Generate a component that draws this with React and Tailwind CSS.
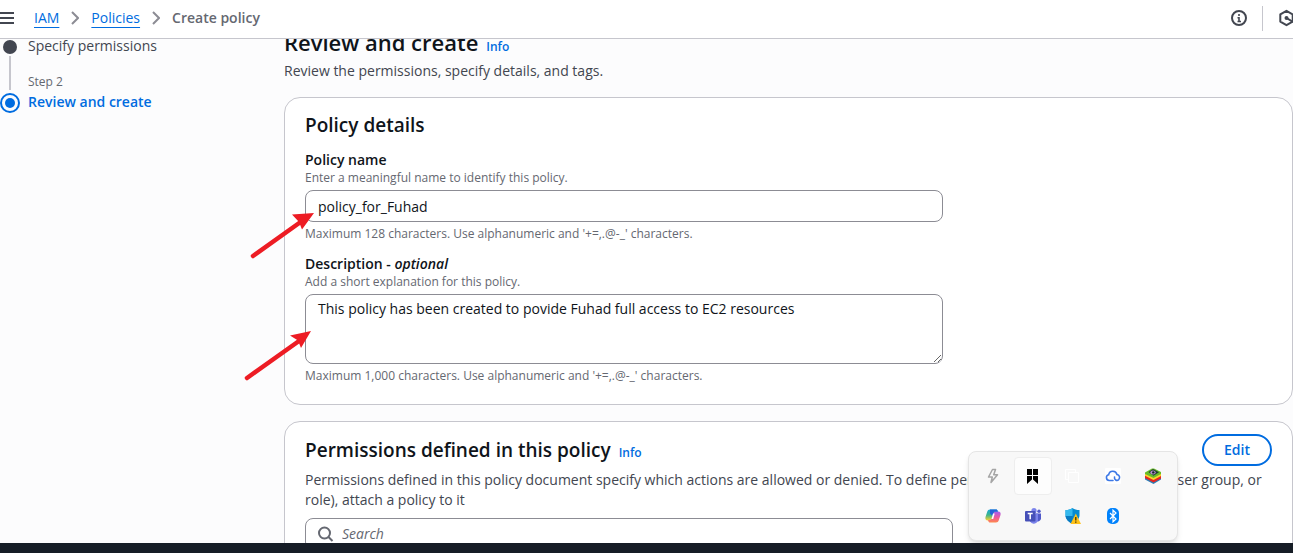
import React from "react";

function Chevron() {
  return (
    <svg className="h-4 w-2 shrink-0" viewBox="0 0 8 16" fill="none" stroke="#8c8c94" strokeWidth="2" aria-hidden="true">
      <path d="M1 2l6 6-6 6" />
    </svg>
  );
}

function Header() {
  return (
    <header className="relative z-10 flex h-[39px] shrink-0 items-center border-b border-[#c6c6cd] bg-white pb-0.5">
      <button aria-label="Open navigation" className="h-4 w-[14px] text-[#424650]">
        <svg viewBox="0 0 14 16" className="h-4 w-[14px]" fill="none" stroke="currentColor" strokeWidth="2" aria-hidden="true">
          <path d="M0 3h14M0 8h14M0 13h14" />
        </svg>
      </button>
      <nav aria-label="Breadcrumbs" className="ml-5 flex items-center gap-3 text-[14px] leading-5">
        <a href="#iam" className="text-[#006ce0] underline underline-offset-4">IAM</a>
        <Chevron />
        <a href="#policies" className="text-[#006ce0] underline underline-offset-4">Policies</a>
        <Chevron />
        <span className="font-semibold text-[#656871]">Create policy</span>
      </nav>
      <div className="ml-auto flex items-center overflow-hidden">
        <button aria-label="Information" className="text-[#424650]">
          <svg viewBox="0 0 16 16" className="h-4 w-4" fill="none" stroke="currentColor" strokeWidth="2" aria-hidden="true">
            <circle cx="8" cy="8" r="7" />
            <path d="M8 4v2M6.500 7.700H8V11M6.500 11.500h3.500" strokeWidth="1.600" />
          </svg>
        </button>
        <div className="ml-[15px] h-[25px] w-px bg-[#c6c6cd]" />
        <button aria-label="Settings" className="ml-4 -mr-1 text-[#424650]">
          <svg viewBox="0 0 18 18" className="h-[18px] w-[18px]" fill="none" stroke="currentColor" strokeWidth="2" strokeLinejoin="round" aria-hidden="true">
            <path d="M7.500 1.800l6.200 3.600v7.200l-6.200 3.600-6.200-3.600V5.400z" />
            <path d="M7.500 9l6.500 4" />
            <circle cx="7.500" cy="9" r="2" fill="currentColor" stroke="none" />
          </svg>
        </button>
      </div>
    </header>
  );
}

function Steps() {
  return (
    <ol className="-mt-[3px] w-[284px] shrink-0">
      <li className="flex h-[38px] gap-2">
        <div className="flex w-5 flex-col items-center pt-1">
          <span className="h-[14px] w-[14px] rounded-full bg-[#424650]" />
          <span className="mt-0.5 w-0.5 flex-1 bg-[#c6c6cd]" />
        </div>
        <a href="#specify" className="text-[14px] leading-5 text-[#424650]">Specify permissions</a>
      </li>
      <li className="flex gap-2">
        <div className="flex w-5 flex-col items-center">
          <span className="h-4 w-0.5 bg-[#c6c6cd]" />
          <span className="mt-[3px] flex h-5 w-5 items-center justify-center rounded-full border-2 border-[#006ce0]">
            <span className="h-[10px] w-[10px] rounded-full bg-[#006ce0]" />
          </span>
        </div>
        <div>
          <div className="text-[12px] leading-4 text-[#656871]">Step 2</div>
          <div className="mt-0.5 text-[14px] leading-5 font-semibold text-[#006ce0]">Review and create</div>
        </div>
      </li>
    </ol>
  );
}

function InfoLink() {
  return <a href="#info" className="text-[12px] font-semibold text-[#006ce0]">Info</a>;
}

function PolicyDetails() {
  return (
    <section className="mt-4 rounded-2xl border border-[#c6c6cd] bg-white px-5 pt-[15px] pb-5">
      <h2 className="text-[19px] leading-6 font-semibold">Policy details</h2>
      <div className="mt-[13px] max-w-[638px]">
        <label htmlFor="policy-name" className="block text-[14px] leading-5 font-semibold">Policy name</label>
        <p className="text-[12px] leading-4 text-[#656871]">Enter a meaningful name to identify this policy.</p>
        <input
          id="policy-name"
          defaultValue="policy_for_Fuhad"
          className="mt-1 block h-8 w-full rounded-lg border border-[#8c8c94] bg-white px-3 text-[14px] leading-5"
        />
        <p className="mt-1 text-[12px] leading-4 text-[#656871]">Maximum 128 characters. Use alphanumeric and '+=,.@-_' characters.</p>
      </div>
      <div className="mt-3 max-w-[638px]">
        <label htmlFor="description" className="block text-[14px] leading-5 font-semibold">Description - <i>optional</i></label>
        <p className="text-[12px] leading-4 text-[#656871]">Add a short explanation for this policy.</p>
        <textarea
          id="description"
          defaultValue="This policy has been created to povide Fuhad full access to EC2 resources"
          className="mt-1 block h-[70px] w-full resize rounded-lg border border-[#8c8c94] bg-white px-3 py-1 text-[14px] leading-5"
        />
        <p className="mt-1 text-[12px] leading-4 text-[#656871]">Maximum 1,000 characters. Use alphanumeric and '+=,.@-_' characters.</p>
      </div>
    </section>
  );
}

function Permissions() {
  return (
    <section className="mt-4 rounded-2xl border border-[#c6c6cd] bg-white px-5 pt-3 pb-5">
      <div className="flex items-center justify-between">
        <div className="flex items-baseline gap-2">
          <h2 className="text-[19px] leading-6 font-semibold">Permissions defined in this policy</h2>
          <InfoLink />
        </div>
        <button className="h-8 w-[70px] rounded-full border-2 border-[#006ce0] text-[14px] leading-5 font-semibold text-[#006ce0]">Edit</button>
      </div>
      <p className="mt-1 text-[14px] leading-5 text-[#424650]">
        Permissions defined in this policy document specify which actions are allowed or denied. To define permissions for an identity (user, user group, or role), attach a policy to it
      </p>
      <div className="mt-2 flex h-8 max-w-[648px] items-center gap-2 rounded-lg border border-[#8c8c94] px-3">
        <svg viewBox="0 0 16 16" className="h-4 w-4 shrink-0" fill="none" stroke="#656871" strokeWidth="2" aria-hidden="true">
          <circle cx="6.500" cy="7" r="5.500" />
          <path d="M10.500 11l4 4" />
        </svg>
        <input type="search" aria-label="Search" placeholder="Search" className="w-full text-[14px] leading-5 outline-none placeholder:text-[#656871] placeholder:italic" />
      </div>
    </section>
  );
}

function Arrows() {
  return (
    <svg className="pointer-events-none absolute top-[205px] left-[240px] z-20 h-[185px] w-[80px]" viewBox="240 205 80 185" aria-hidden="true">
      <g stroke="#ed1c24" strokeWidth="4.500" strokeLinecap="round">
        <path d="M253 256L302 221" />
        <path d="M247 378L299 341" />
      </g>
      <g fill="#ed1c24">
        <path d="M314 213L292 214.500L299 222L302 229.500z" />
        <path d="M311 331L290 335.500L298 340.500L301 348z" />
      </g>
    </svg>
  );
}

function TrayIcon({ label, children, active }) {
  return (
    <button aria-label={label} className={active ? "flex h-[38px] w-[38px] items-center justify-center rounded border border-[#eeeeee] bg-[#fdfdfd]" : "flex h-[38px] w-[38px] items-center justify-center"}>
      <svg viewBox="0 0 16 16" className="h-4 w-4">{children}</svg>
    </button>
  );
}

function Tray() {
  return (
    <div className="absolute right-[115px] bottom-[12px] z-20 grid h-[90px] w-[210px] grid-cols-5 content-center justify-items-center gap-y-0.5 rounded-lg border border-[#e5e5e5] bg-[#f8f8f8] px-1 shadow-md">
      <TrayIcon label="Power">
        <path d="M7.500 1.500L3.500 9h3.800l-1.300 5.500L12.500 6.800H8.700L10.500 1.500z" fill="none" stroke="#a5a5a5" strokeWidth="1.500" strokeLinejoin="round" />
      </TrayIcon>
      <TrayIcon label="Bookmarks" active>
        <path d="M2 1h5v6H2zM8 1h5v6H8zM2 8h5v3.500L2 16zM8 8h5v8l-5-4.500z" fill="#000" />
      </TrayIcon>
      <TrayIcon label="Windows">
        <path d="M3.500 4.500h10v10h-10zM3.500 11.500h-3V1.500h10v3" fill="none" stroke="#fff" />
      </TrayIcon>
      <TrayIcon label="Cloud sync">
        <rect width="16" height="16" rx="1" fill="#fff" />
        <path d="M8 12.500H4.200a2.900 2.900 0 0 1-.6-5.700A4.300 4.300 0 0 1 12 6.500a3 3 0 0 1 1.700 5.100c-1.900 1.800-4.700 0-4.200-2.600" fill="none" stroke="#3c78e6" strokeWidth="1.600" strokeLinecap="round" />
      </TrayIcon>
      <TrayIcon label="App player">
        <path d="M0 8.500l8 4 8-4v3L8.500 16 0 11.500z" fill="#2c7fb8" />
        <path d="M0 7l8 4 8-4v3.500L8.500 14.500 0 10z" fill="#e52620" />
        <path d="M0 5.200l8 4 8-4v2.800L8.500 12 0 7.700z" fill="#ffd329" />
        <path d="M0 4.500L7 .5h2l7 3.500v2L8.500 10 0 6z" fill="#68bd28" />
        <path d="M3.500 4L8 1l6 3.200-5.500 3.500z" fill="#243e32" />
        <ellipse cx="8" cy="4.400" rx="2.700" ry="2" fill="#b193c8" />
        <circle cx="8.300" cy="4.400" r="1.200" fill="#17252a" />
      </TrayIcon>
      <TrayIcon label="Copilot">
        <defs>
          <linearGradient id="cp-left" x1="0" y1="0" x2="0" y2="1">
            <stop stopColor="#16a7d8" /><stop offset=".5" stopColor="#3fb58a" /><stop offset="1" stopColor="#ffd02f" />
          </linearGradient>
          <linearGradient id="cp-right" x1="0" y1="0" x2="0" y2="1">
            <stop stopColor="#a35cf0" /><stop offset=".55" stopColor="#ee5a9a" /><stop offset="1" stopColor="#ff8a4c" />
          </linearGradient>
        </defs>
        <path d="M5 1.500h6c1 0 1.500.6 1.700 1.500L13 4h-2c-1 0-1.500.6-1.800 1.500L7.600 11c-.4 1.200-1 1.500-2 1.500H2.800C.8 12.500 0 11 .5 9L2.300 3.500C2.800 2.200 3.500 1.500 5 1.500z" fill="url(#cp-left)" />
        <path d="M11 14.500H5c-1 0-1.500-.6-1.700-1.500L3 12h2c1 0 1.500-.6 1.800-1.500L8.400 5c.4-1.200 1-1.500 2-1.500h2.800c2 0 2.800 1.500 2.300 3.500l-1.800 5.500c-.5 1.300-1.200 2-2.700 2z" fill="url(#cp-right)" />
        <path d="M5 1.500h6c1 0 1.500.6 1.700 1.500l.3.600h-2.500c-1 0-1.700.4-2.100 1.400L7.500 8 5 5.500z" fill="#2263d8" />
        <path d="M8 5.500h1.700l-1.500 5.500H6.500z" fill="#fff" />
      </TrayIcon>
      <TrayIcon label="Teams">
        <circle cx="9" cy="2.700" r="2.600" fill="#7b83eb" />
        <circle cx="14" cy="3.200" r="1.700" fill="#5059c9" />
        <path d="M11 5.500h5v5a3 3 0 0 1-4 2.700z" fill="#5059c9" />
        <path d="M5 5.500h8v6a4.300 4.300 0 0 1-8 2z" fill="#7b83eb" />
        <rect y="3" width="10.500" height="10.500" rx="1" fill="#4650b8" />
        <path d="M2.700 5.500h5M5.200 5.500v5.700" stroke="#fff" strokeWidth="1.500" />
      </TrayIcon>
      <TrayIcon label="Security">
        <path d="M7.500 0c2 1.500 4 2 7 2v5c0 4-3 7-7 9-4-2-7-5-7-9V2c3 0 5-.5 7-2z" fill="#078bd0" />
        <path d="M7.500 0v8h-7V2c3 0 5-.5 7-2z" fill="#35b9ed" />
        <path d="M7.500 8v8c-4-2-6.800-4.700-7-8z" fill="#087ac1" />
        <path d="M10.800 5.500L16 16H5.500z" fill="#ffc21a" />
        <path d="M10.800 9v3.500M10.800 13.500v1.200" stroke="#3c3000" strokeWidth="1.300" />
      </TrayIcon>
      <TrayIcon label="Bluetooth">
        <rect x="2" width="12" height="16" rx="5" fill="#0082fc" />
        <path d="M5 5l6 6-3 2.800V2.200L11 5l-6 6" fill="none" stroke="#fff" strokeWidth="1.200" />
      </TrayIcon>
    </div>
  );
}

export default function App() {
  return (
    <div className="relative flex h-screen flex-col overflow-hidden bg-[#fcfcfd] font-['Open_Sans','Noto_Sans',sans-serif] text-[#0f141a]">
      <Header />
      <div className="flex min-h-0 flex-1 items-start overflow-hidden">
        <Steps />
        <main className="-mt-3 min-w-0 flex-1">
          <div className="flex items-baseline gap-2">
            <h1 className="text-[22px] leading-[30px] font-semibold">Review and create</h1>
            <InfoLink />
          </div>
          <p className="mt-1 text-[14px] leading-5 text-[#424650]">Review the permissions, specify details, and tags.</p>
          <PolicyDetails />
          <Permissions />
        </main>
      </div>
      <footer className="h-[10px] shrink-0 bg-[#161d26]" />
      <Arrows />
      <Tray />
    </div>
  );
}
